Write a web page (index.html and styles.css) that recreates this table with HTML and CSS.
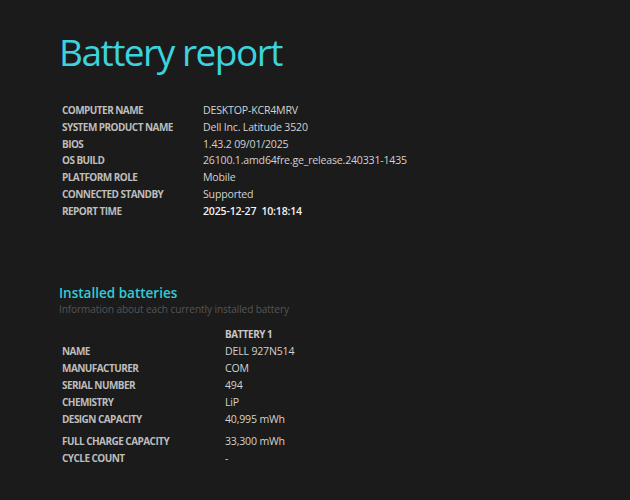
FILE: index.html
```html
<!DOCTYPE html>
<html>
<head>
<meta charset="utf-8">
<link rel="stylesheet" href="styles.css">
</head>
<body>
<div class="page">
  <h1 class="title">Battery report</h1>
  <table class="info">
    <tr><td class="label">COMPUTER NAME</td><td class="value">DESKTOP-KCR4MRV</td></tr>
    <tr><td class="label">SYSTEM PRODUCT NAME</td><td class="value">Dell Inc. Latitude 3520</td></tr>
    <tr><td class="label">BIOS</td><td class="value">1.43.2 09/01/2025</td></tr>
    <tr><td class="label">OS BUILD</td><td class="value">26100.1.amd64fre.ge_release.240331-1435</td></tr>
    <tr><td class="label">PLATFORM ROLE</td><td class="value">Mobile</td></tr>
    <tr><td class="label">CONNECTED STANDBY</td><td class="value">Supported</td></tr>
    <tr><td class="label">REPORT TIME</td><td class="value strong">2025-12-27&nbsp;&nbsp;10:18:14</td></tr>
  </table>

  <h2 class="section">Installed batteries</h2>
  <div class="subtitle">Information about each currently installed battery</div>
  <table class="batt">
    <tr><td class="label"></td><td class="head">BATTERY 1</td></tr>
    <tr><td class="label">NAME</td><td class="value">DELL 927N514</td></tr>
    <tr><td class="label">MANUFACTURER</td><td class="value">COM</td></tr>
    <tr><td class="label">SERIAL NUMBER</td><td class="value">494</td></tr>
    <tr><td class="label">CHEMISTRY</td><td class="value">LiP</td></tr>
    <tr class="spaced"><td class="label">DESIGN CAPACITY</td><td class="value">40,995 mWh</td></tr>
    <tr><td class="label">FULL CHARGE CAPACITY</td><td class="value">33,300 mWh</td></tr>
    <tr><td class="label">CYCLE COUNT</td><td class="value">-</td></tr>
  </table>
</div>
</body>
</html>
```
FILE: styles.css
```css
html, body {
  margin: 0;
  background: #1b1b1b;
  height: 100%;
}
body {
  font-family: "Open Sans", "Noto Sans", sans-serif;
  color: #cfcfcf;
}
.page {
  padding: 27px 0 0 59px;
}
.title {
  margin: 0;
  font-size: 37px;
  font-weight: 400;
  color: #3cd3df;
  letter-spacing: -1.5px;
  line-height: 50px;
}
table {
  border-collapse: collapse;
}
.info {
  margin-top: 25px;
  margin-left: 3px;
}
.info td {
  padding: 0;
  height: 16.8px;
  line-height: 16.8px;
}
.info .label {
  width: 141px;
}
.label {
  font-size: 10px;
  font-weight: 700;
  color: #bdbdbd;
  letter-spacing: -0.55px;
  vertical-align: middle;
}
.value {
  font-size: 10.6px;
  color: #d2d2d2;
  letter-spacing: -0.2px;
}
.value.strong {
  color: #f2f2f2;
  font-weight: 600;
}
.section {
  margin: 65px 0 0 0;
  font-size: 13.5px;
  font-weight: 600;
  color: #35cbd6;
  line-height: 17px;
  letter-spacing: 0;
}
.subtitle {
  font-size: 10.1px;
  color: #555555;
  line-height: 14px;
  letter-spacing: -0.1px;
}
.batt {
  margin-top: 10px;
  margin-left: 3px;
}
.batt td {
  padding: 0;
  height: 17px;
  line-height: 17px;
}
.batt .label {
  width: 163px;
}
.batt .head {
  font-size: 9.8px;
  font-weight: 700;
  color: #c8c8c8;
  letter-spacing: -0.4px;
}
.batt tr.spaced td {
  padding-bottom: 5px;
}
```
